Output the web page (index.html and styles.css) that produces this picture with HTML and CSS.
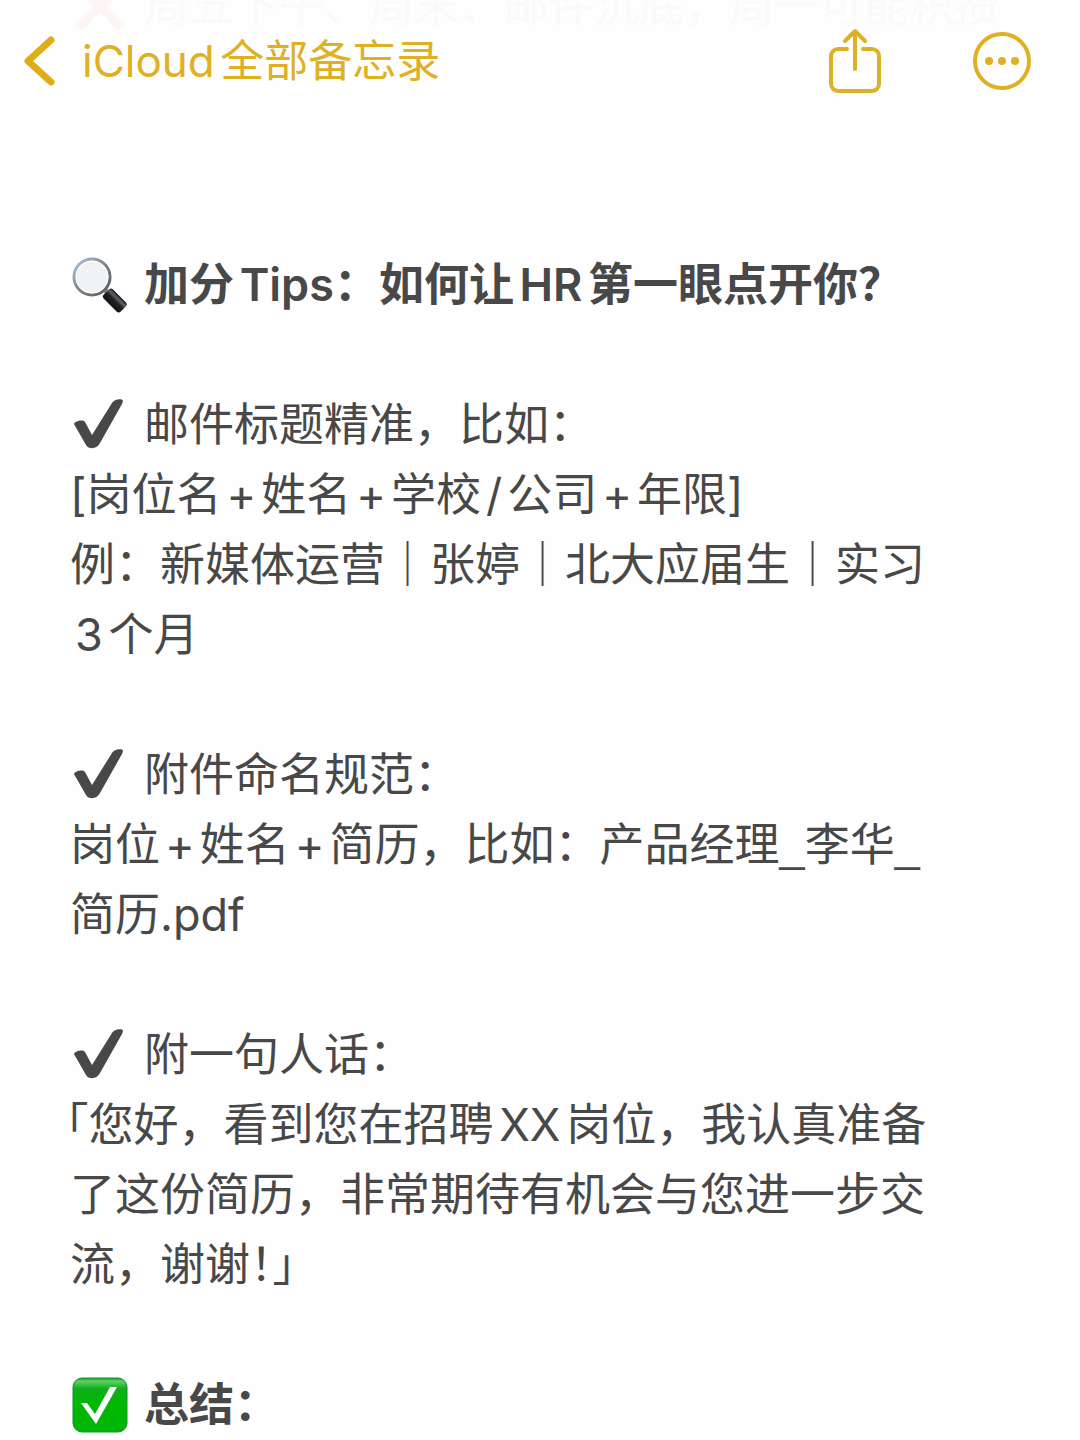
FILE: index.html
```html
<!DOCTYPE html>
<html lang="zh-CN">
<head>
<meta charset="utf-8">
<meta name="viewport" content="width=device-width, initial-scale=1">
<title>备忘录</title>
<link rel="stylesheet" href="styles.css">
</head>
<body>
<header class="bar">
  <p class="under"><svg class="cross" viewBox="0 0 56 56" aria-hidden="true"><path d="M6 6 50 50M50 6 6 50"/></svg>周五下午、周末：邮件沉底，周一可能积攒</p>
  <a class="back" href="#">
    <svg class="chevron" viewBox="0 0 32 50" aria-hidden="true"><path d="M27 4 4 25 27 46"/></svg>
    <span>iCloud全部备忘录</span>
  </a>
  <div class="actions">
    <button class="action" type="button" aria-label="共享">
      <svg class="share" viewBox="0 0 52 66" aria-hidden="true"><path d="M18 21H9a7 7 0 0 0-7 7v28a7 7 0 0 0 7 7h34a7 7 0 0 0 7-7V28a7 7 0 0 0-7-7h-9M26 41V3M16 13 26 3l10 10"/></svg>
    </button>
    <button class="action" type="button" aria-label="更多">
      <svg class="more" viewBox="0 0 58 58" aria-hidden="true"><circle class="ring" cx="29" cy="29" r="27"/><circle cx="16" cy="29" r="4"/><circle cx="29" cy="29" r="4"/><circle cx="42" cy="29" r="4"/></svg>
    </button>
  </div>
</header>
<main class="note">
  <h1 class="heading">
    <svg class="emoji" viewBox="0 0 56 56" aria-hidden="true">
      <defs>
        <linearGradient id="rim" x1="0" y1="0" x2="1" y2="1"><stop offset="0" stop-color="#a9c8e6"/><stop offset=".4" stop-color="#8b8f94"/><stop offset="1" stop-color="#55585c"/></linearGradient>
        <linearGradient id="grip" x1="0" y1="1" x2="0" y2="0"><stop offset="0" stop-color="#111"/><stop offset=".5" stop-color="#222327"/><stop offset=".75" stop-color="#62656b"/><stop offset="1" stop-color="#111"/></linearGradient>
      </defs>
      <path d="M33 33 38 38" stroke="#8b8d90" stroke-width="5"/>
      <circle cx="20" cy="20" r="18" fill="#f1f2f3" stroke="url(#rim)" stroke-width="3"/>
      <circle cx="20" cy="20" r="16" fill="none" stroke="#fff" stroke-width="1"/>
      <rect x="49" y="-6" width="24" height="13" rx="3" transform="rotate(45)" fill="url(#grip)"/>
    </svg>
    <span>加分Tips：如何让HR第一眼点开你？</span>
  </h1>
  <section class="block">
    <h2 class="item"><svg class="emoji" viewBox="0 0 56 56" aria-hidden="true"><path class="tick" d="M2 27c1-3 9-5 11-2l7 13L40 6c2-4 11-5 11-2L50 7 28 46c-3 6-11 7-14 2Z"/></svg><span>邮件标题精准，比如：</span></h2>
    <p>[岗位名<span class="op">+</span>姓名<span class="op">+</span>学校<span class="op">/</span>公司<span class="op">+</span>年限]<br>例：新媒体运营｜张婷｜北大应届生｜实习<br><span class="lead">3</span>个月</p>
  </section>
  <section class="block">
    <h2 class="item"><svg class="emoji" viewBox="0 0 56 56" aria-hidden="true"><path class="tick" d="M2 27c1-3 9-5 11-2l7 13L40 6c2-4 11-5 11-2L50 7 28 46c-3 6-11 7-14 2Z"/></svg><span>附件命名规范：</span></h2>
    <p>岗位<span class="op">+</span>姓名<span class="op">+</span>简历，比如：产品经理<span class="rule">_</span>李华<span class="rule">_</span><br><span class="tight">简历.pdf</span></p>
  </section>
  <section class="block">
    <h2 class="item"><svg class="emoji" viewBox="0 0 56 56" aria-hidden="true"><path class="tick" d="M2 27c1-3 9-5 11-2l7 13L40 6c2-4 11-5 11-2L50 7 28 46c-3 6-11 7-14 2Z"/></svg><span>附一句人话：</span></h2>
    <p class="quote"><span class="half">「</span>您好，看到您在招聘XX岗位，我认真准备<br>了这份简历，非常期待有机会与您进一步交<br>流，谢谢<span class="half">！」</span></p>
  </section>
  <h2 class="heading">
    <svg class="emoji" viewBox="0 0 56 56" aria-hidden="true">
      <defs><linearGradient id="green" x1="0" y1="0" x2="0" y2="1"><stop offset="0" stop-color="#16a028"/><stop offset=".06" stop-color="#5fd068"/><stop offset=".2" stop-color="#0fae1c"/><stop offset=".5" stop-color="#00b900"/><stop offset="1" stop-color="#00b408"/></linearGradient></defs>
      <rect x="1" y="1" width="54" height="54" rx="9" fill="url(#green)" stroke="#159326" stroke-width="1"/>
      <path d="M9 26h6l8 11L38 10h7L24 47Z" fill="#fff"/>
    </svg>
    <span>总结：</span>
  </h2>
</main>
</body>
</html>
```
FILE: styles.css
```css
* { box-sizing: border-box; }
body {
  margin: 0;
  background: #fefefe;
  color: #484848;
  font: 400 45px/70px Inter, "Noto Sans CJK SC", sans-serif;
  text-autospace: normal;
}
h1, h2, p { margin: 0; font-size: inherit; line-height: inherit; }
svg { display: block; flex: none; fill: none; }
.bar {
  position: relative;
  display: flex;
  align-items: center;
  justify-content: space-between;
  height: 122px;
  padding: 0 49px 0 24px;
  overflow: hidden;
  color: #dfb023;
}
.under {
  position: absolute;
  top: -29px;
  left: 72px;
  display: flex;
  align-items: center;
  gap: 16px;
  color: #fafafa;
  white-space: nowrap;
}
.cross { width: 56px; height: 56px; stroke: #fef5f4; stroke-width: 9; }
.back {
  position: relative;
  display: flex;
  align-items: center;
  gap: 26px;
  color: inherit;
  font-size: 44px;
  text-decoration: none;
}
.chevron { width: 32px; height: 50px; stroke: #e0ad17; stroke-width: 7; stroke-linecap: round; stroke-linejoin: round; }
.actions { position: relative; display: flex; align-items: center; gap: 92px; }
.action { padding: 0; border: 0; background: none; color: inherit; }
.share { width: 52px; height: 66px; stroke: currentColor; stroke-width: 4; stroke-linecap: round; stroke-linejoin: round; }
.more { width: 58px; height: 58px; fill: currentColor; }
.ring { fill: none; stroke: currentColor; stroke-width: 4; }
.note { padding: 128px 70px 0; }
.heading, .item { display: flex; align-items: center; gap: 16px; padding-left: 2px; }
.heading { font-weight: 600; }
.item { font-weight: 400; }
.emoji { width: 56px; height: 56px; }
.tick { fill: #484848; }
.block { margin: 70px 0; }
.op { margin: 0 5px; }
.lead { margin-left: 5px; }
.rule { font-family: "Liberation Sans", sans-serif; line-height: 1; }
.tight { text-autospace: no-autospace; }
.quote { text-indent: -4px; }
.half { font-family: "Noto Sans CJK SC", sans-serif; font-feature-settings: "halt"; line-height: 1; }
```
